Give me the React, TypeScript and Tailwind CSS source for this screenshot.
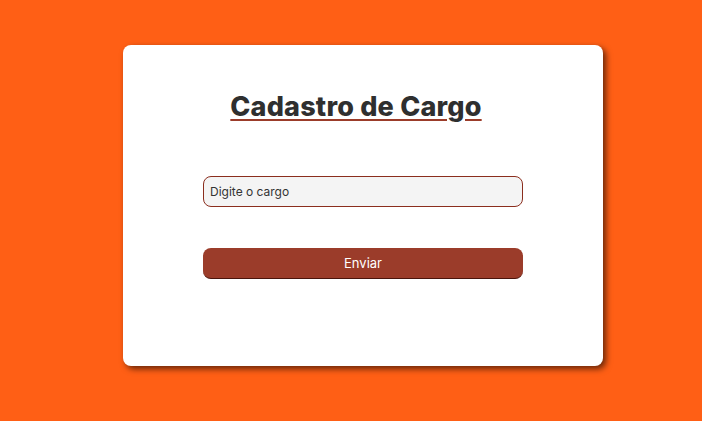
import React from "react";

export default function App() {
  return (
    <div className="w-[702px] h-[421px] bg-[#ff5f15] pt-[45px] pl-[123px]" style={{ fontFamily: "Inter, 'Open Sans', sans-serif" }}>
      <div className="w-[480px] h-[321px] bg-white rounded-[8px] shadow-[3px_3px_6px_rgba(0,0,0,0.6)] flex flex-col items-center">
        <h1 className="mt-[42px] mr-[14px] h-[40px] leading-[40px] text-[27px] font-extrabold tracking-[0.2px] text-[#2f2f2f] underline decoration-[#9b3c2a] decoration-2 underline-offset-[3px]">
          Cadastro de Cargo
        </h1>
        <input
          type="text"
          placeholder="Digite o cargo"
          className="mt-[49px] w-[320px] h-[31px] rounded-[8px] border border-[#8b2e1e] bg-[#f4f4f4] px-[6px] text-[12px] text-[#333] placeholder:text-[#333] outline-none"
        />
        <button className="mt-[41px] w-[320px] h-[31px] rounded-[8px] bg-[#9b3c2a] border-b border-[#4a150c] text-white text-[13px] pt-[1px]">
          Enviar
        </button>
      </div>
    </div>
  );
}
